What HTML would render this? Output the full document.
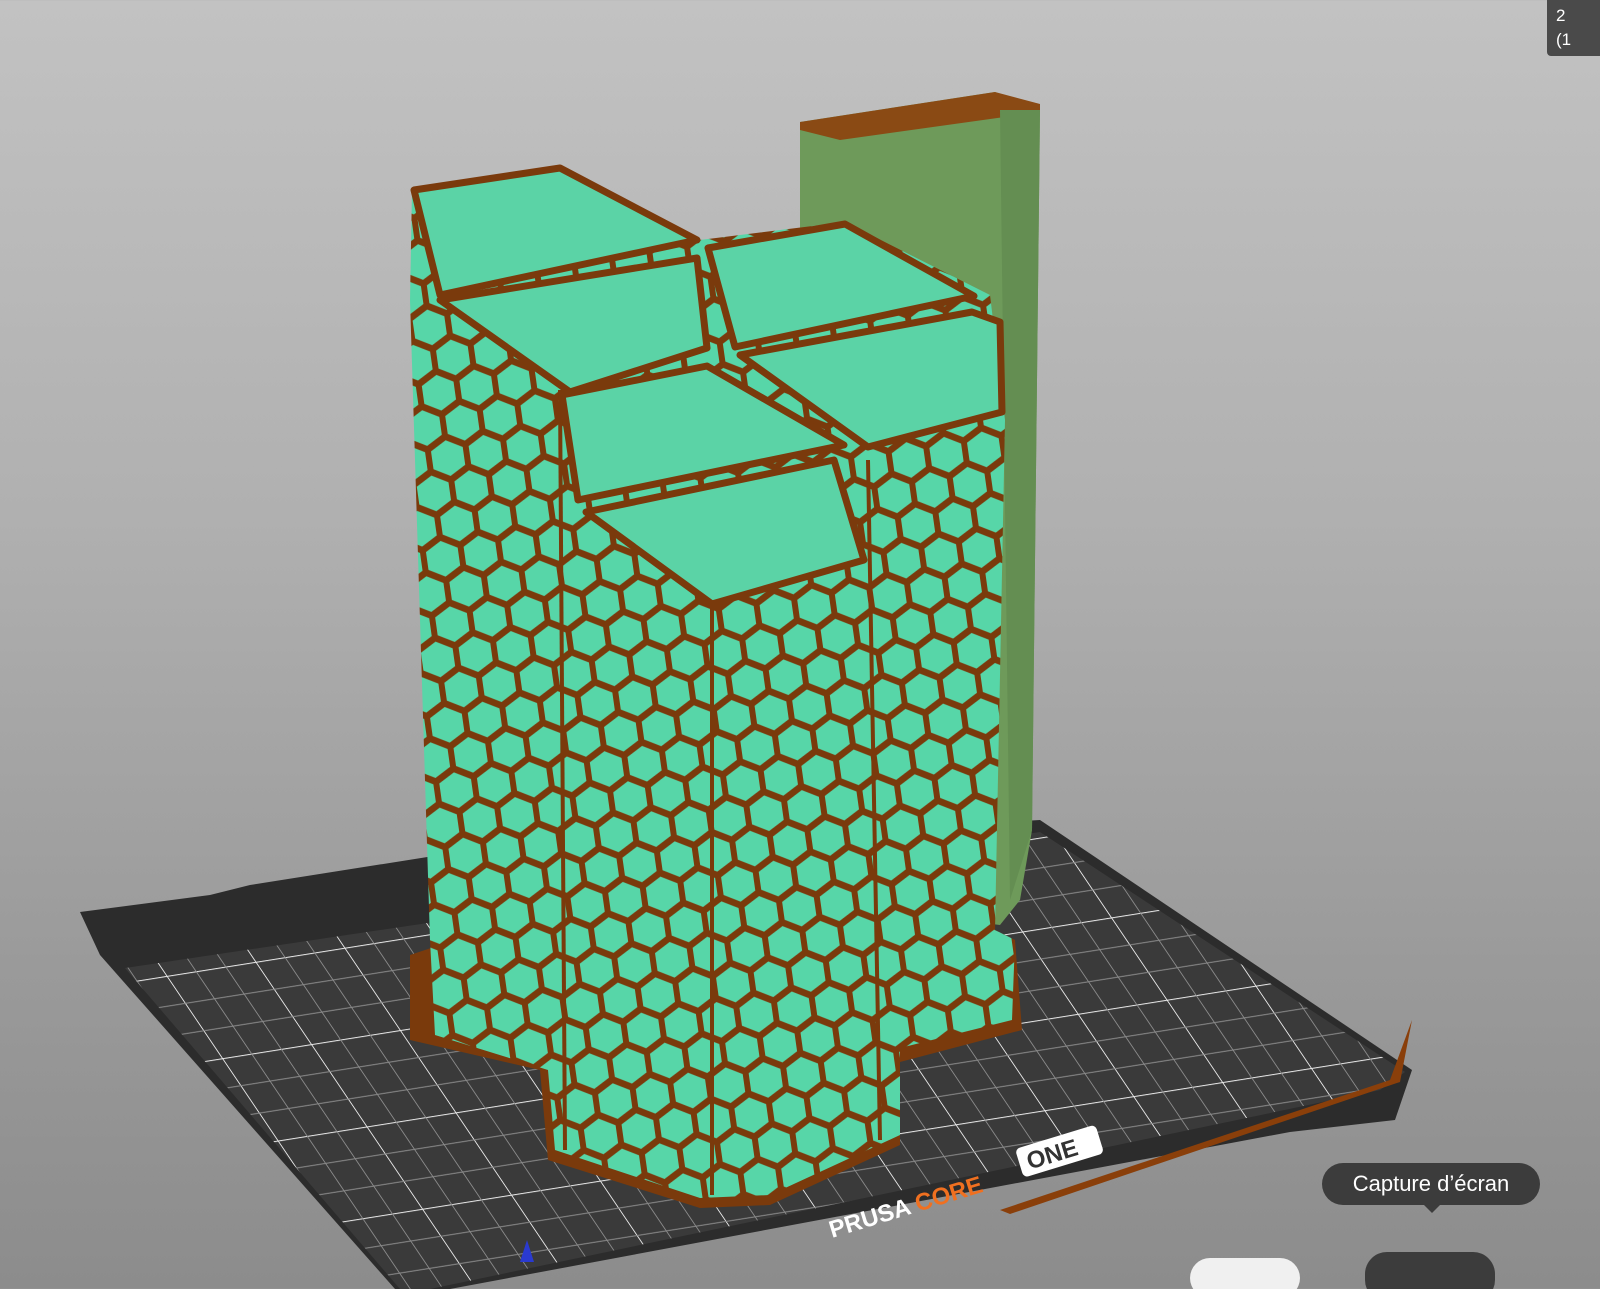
<!DOCTYPE html>
<html><head><meta charset="utf-8"><style>
html,body{margin:0;padding:0;width:1600px;height:1289px;overflow:hidden}
body{background:linear-gradient(#c2c2c2 0%,#b0b0b0 40%,#9a9a9a 75%,#8c8c8c 100%);font-family:"Liberation Sans",sans-serif}
svg{position:absolute;left:0;top:0}
.tip{position:absolute;left:1322px;top:1163px;width:218px;height:42px;border-radius:21px;background:#3c3c3c;color:#fff;font-size:22px;line-height:42px;text-align:center}
.tip:after{content:"";position:absolute;left:102px;bottom:-8px;border:8px solid transparent;border-bottom:0;border-top-color:#3c3c3c}
.tab{position:absolute;left:1547px;top:0;width:60px;height:56px;background:#4a4a4a;border-radius:0 0 0 4px;color:#fff;font-size:17px;line-height:24px;padding:4px 0 0 9px;box-sizing:border-box}
</style></head><body>
<svg width="1600" height="1289" viewBox="0 0 1600 1289">
<defs>
<pattern id="hex" width="38" height="66" patternUnits="userSpaceOnUse" patternTransform="rotate(-8)">
<rect width="38" height="66" fill="#7a3a0c"/>
<polygon points="19,3 35,12 35,30 19,39 3,30 3,12" fill="#57d6a8"/>
<polygon points="0,36 16,45 16,63 0,72 -16,63 -16,45" fill="#57d6a8"/>
<polygon points="38,36 54,45 54,63 38,72 22,63 22,45" fill="#57d6a8"/>
<polygon points="0,-30 16,-21 16,-3 0,6 -16,-3 -16,-21" fill="#57d6a8"/>
<polygon points="38,-30 54,-21 54,-3 38,6 22,-3 22,-21" fill="#57d6a8"/>
</pattern>
<pattern id="grid" width="90" height="90" patternUnits="userSpaceOnUse" patternTransform="rotate(-9) skewX(25)">
<rect width="90" height="90" fill="#3a3a3a"/>
<path d="M0 0H90M0 0V90" stroke="#e8e8e8" stroke-width="2"/>
<path d="M0 30H90M0 60H90M30 0V90M60 0V90" stroke="#8a8a8a" stroke-width="1"/>
</pattern>
</defs>
<!-- bed base -->
<polygon points="80,912 210,895 250,885 440,855 1040,820 1412,1070 1395,1120 1290,1132 450,1289 395,1289 100,955" fill="#2c2c2c"/>
<polygon points="125,968 1040,832 1405,1072 1380,1090 430,1289 400,1289" fill="url(#grid)"/>
<polygon points="1000,1210 1390,1080 1412,1020 1400,1082 1010,1214" fill="#8a3f0a"/>
<!-- green tall box -->
<polygon points="800,122 995,92 1040,110 1032,830 1020,900 1000,925 800,900" fill="#6e9a5a"/>
<polygon points="800,122 995,92 1040,104 1040,112 840,140 800,130" fill="#8a4a14"/>
<polygon points="1000,110 1040,110 1032,830 1010,900" fill="#648e52"/>
<!-- brim -->
<polygon points="410,955 440,945 995,930 1015,940 1022,1030 900,1062 900,1145 770,1205 700,1208 548,1160 540,1070 410,1040" fill="#7a3a0c"/>
<!-- object body -->
<polygon points="412,190 560,165 700,240 845,222 990,295 1005,420 995,930 1015,940 1012,1020 900,1048 900,1135 770,1195 700,1198 555,1150 548,1070 435,1035 430,940 410,300" fill="url(#hex)"/>
<g stroke="#7a3a0c" stroke-width="4" fill="none">
<path d="M560 390 L565 1150"/><path d="M712 600 L712 1195"/><path d="M868 460 L880 1140"/>
</g>
<!-- top cells -->
<g fill="#5bd3a6" stroke="#7a3a0c" stroke-width="7" stroke-linejoin="round">
<polygon points="414,190 560,168 697,240 440,295"/>
<polygon points="440,300 697,258 707,348 570,392"/>
<polygon points="708,248 845,224 974,296 735,347"/>
<polygon points="740,355 972,312 1000,322 1002,412 868,447"/>
<polygon points="562,395 707,366 844,445 578,500"/>
<polygon points="586,512 834,460 864,560 712,604"/>
</g>
<text x="0" y="0" transform="translate(832,1238) rotate(-17)" font-family="Liberation Sans,sans-serif" font-weight="bold" font-size="24" fill="#fff">PRUSA <tspan fill="#f07020">CORE</tspan></text>
<g transform="translate(1022,1172) rotate(-17)"><rect x="0" y="-24" width="84" height="30" rx="5" fill="#fff"/><text x="8" y="0" font-family="Liberation Sans,sans-serif" font-weight="bold" font-size="24" fill="#333">ONE</text></g>
<polygon points="520,1262 527,1240 534,1262" fill="#2a3ad0"/>
<rect x="1190" y="1258" width="110" height="40" rx="20" fill="#f0f0f0"/>
<rect x="1365" y="1252" width="130" height="50" rx="22" fill="#3c3c3c"/>
</svg>
<div class="tab">2<br>(1</div>
<div class="tip">Capture d’écran</div>
</body></html>
